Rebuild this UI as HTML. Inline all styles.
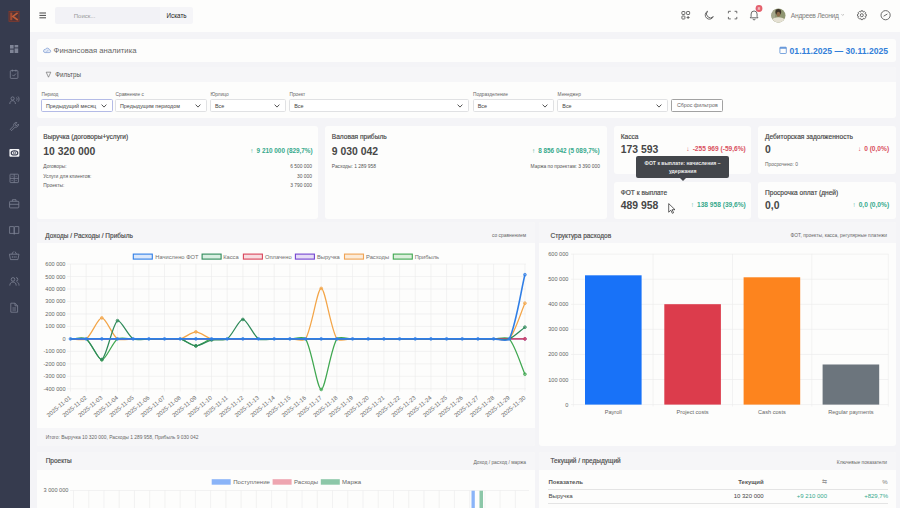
<!DOCTYPE html>
<html><head><meta charset="utf-8">
<style>
*{box-sizing:border-box;margin:0;padding:0}
html,body{width:900px;height:508px;overflow:hidden}
body{position:relative;background:#f4f4f7;font-family:"Liberation Sans",sans-serif;color:#333}
.abs{position:absolute}
.sidebar{left:0;top:0;width:30px;height:508px;background:#363b4e}
.topbar{left:30px;top:0;width:870px;height:31.5px;background:#fdfdfc}
.card{position:absolute;background:#fdfdfc;border-radius:3px}
.t{position:absolute;white-space:nowrap;line-height:1}
.b{font-weight:bold}
.sel{position:absolute;top:99.3px;height:13px;border:0.7px solid #e0e1e3;border-radius:1.6px;background:#fff}
.sel span{position:absolute;left:4px;top:3px;font-size:5.4px;color:#444;white-space:nowrap}
.sel svg{position:absolute;right:5px;top:3.4px}
.lab{position:absolute;top:91.7px;font-size:4.8px;color:#666;white-space:nowrap}
.ic{position:absolute}
</style></head><body>
<div class="abs sidebar"></div>
<div class="abs topbar"></div>

<!-- sidebar icons -->
<svg class="abs" style="left:0;top:0" width="31" height="320">
  <rect x="9" y="11.4" width="10" height="9.9" fill="#4e3539" stroke="#8a3a2a" stroke-width="0.8"/>
  <rect x="10.2" y="12.6" width="2.1" height="7.6" fill="#a44c34"/>
  <path d="M17.6 12.8 L12.8 16.4 L17.8 20" stroke="#c05e3a" stroke-width="1.6" fill="none"/>
  <g fill="#7f8496">
    <rect x="10" y="45" width="3.6" height="3.6"/><rect x="14.6" y="45" width="3.6" height="2.4"/>
    <rect x="10" y="49.6" width="3.6" height="3.4"/><rect x="14.6" y="48.4" width="3.6" height="4.6"/>
  </g>
  <g fill="none" stroke="#7f8496" stroke-width="0.8">
    <rect x="10.3" y="70.6" width="7.6" height="7.8" rx="0.8"/>
    <path d="M12.3 69.6v2 M15.9 69.6v2 M12.3 74.8l1.3 1.3 2.3-2.5"/>
    <circle cx="12.6" cy="98.5" r="1.6"/><path d="M9.8 104c0-2.2 1.2-3.3 2.8-3.3s2.8 1.1 2.8 3.3 M16.5 97.5c.8.8.8 2.4 0 3.2 M18 96.5c1.4 1.4 1.4 3.8 0 5.2"/>
    <path d="M16.8 122.5a2.6 2.6 0 0 0-3 3.3l-3.5 3.5 1.3 1.3 3.5-3.5a2.6 2.6 0 0 0 3.3-3l-1.5 1.5-1.2-.2-.2-1.2z"/>
  </g>
  <rect x="9.4" y="149" width="10" height="7.8" rx="1" fill="#f4f4f6"/>
  <ellipse cx="14.5" cy="152.9" rx="3.3" ry="2.1" fill="none" stroke="#363b4e" stroke-width="1.1"/>
  <circle cx="14.5" cy="152.9" r="1.1" fill="#f4f4f6" stroke="#363b4e" stroke-width="0.7"/>
  <g fill="none" stroke="#7f8496" stroke-width="0.8">
    <rect x="10" y="174.2" width="8.4" height="8.4" rx="0.6"/><path d="M10 178.4h8.4 M14.2 174.2v8.4 M11.6 176.3h1 M15.6 176.3h1 M11.6 180.5h1 M15.6 180.5h1"/>
    <rect x="9.6" y="201.3" width="9.2" height="6.6" rx="0.8"/><path d="M12.4 201.3v-1.6h3.6v1.6 M9.6 204.3h9.2"/>
    <path d="M9.6 226.6h3.8c.6 0 .8.4.8.8v6.8c0-.4-.3-.8-.8-.8H9.6z M18.8 226.6H15c-.6 0-.8.4-.8.8v6.8c0-.4.3-.8.8-.8h3.8z"/>
    <path d="M9.4 254.2h9.6l-1.1 5.4h-7.4z M11.8 254.2l1.6-2.6 M16.6 254.2l-1.6-2.6 M12.4 256.2v1.6 M14.2 256.2v1.6 M16 256.2v1.6"/>
    <circle cx="13" cy="279.4" r="1.8"/><path d="M9.8 285.6c0-2.4 1.4-3.6 3.2-3.6s3.2 1.2 3.2 3.6 M16 277.6a1.8 1.8 0 0 1 0 3.6 M17.4 282.2c1 .4 1.6 1.6 1.6 3.4"/>
    <path d="M10.8 303.2h4.2l2.6 2.6v6.4h-6.8z M15 303.2v2.6h2.6 M12.4 308h3.6 M12.4 310h3.6"/>
  </g>
</svg>

<!-- topbar -->
<svg class="abs" style="left:39px;top:12px" width="8" height="8"><g fill="#4a4a4a"><rect x="0.4" y="0.5" width="6.6" height="1"/><rect x="0.4" y="2.9" width="6.6" height="1"/><rect x="0.4" y="5.3" width="6.6" height="1"/></g></svg>
<div class="abs" style="left:55px;top:7.2px;width:105px;height:17px;background:#f2f2f6;border-radius:2px 0 0 2px"></div>
<div class="abs" style="left:160px;top:7.2px;width:33px;height:17px;background:#f5f5f8;border-radius:0 2px 2px 0"></div>
<div class="t" style="left:73.8px;top:12.6px;font-size:6px;color:#999">Поиск...</div>
<div class="t" style="left:166.5px;top:12.8px;font-size:6.3px;color:#222">Искать</div>

<svg class="abs" style="left:0;top:0" width="900" height="32">
  <g fill="none" stroke="#5a5a5a" stroke-width="0.9">
    <rect x="681.9" y="11.5" width="3" height="3" rx="0.6"/><rect x="686.6" y="11.5" width="3" height="3" rx="0.6"/><rect x="681.9" y="16" width="3" height="3" rx="0.6"/>
    <path d="M686.6 17.5h3 M688.1 16v3"/>
    <path d="M707.6 11.2 A4.2 4.2 0 1 0 713.3 16.6 A3.6 3.6 0 0 1 707.6 11.2 Z"/>
    <path d="M728.4 13.3v-2h2.4 M734.6 11.3h2.2v2 M736.8 16.9v2h-2.2 M730.8 18.9h-2.4v-2"/>
    <path d="M751.1 16.6v-2.6a3 3 0 0 1 6 0v2.6l0.9 1.2h-7.8z M753 18.8a1.1 1.1 0 0 0 2.2 0"/>
    <path d="M860.70 11.91 L860.96 10.80 L862.84 10.80 L863.10 11.91 L863.38 12.03 L864.35 11.43 L865.67 12.75 L865.07 13.72 L865.19 14.00 L866.30 14.26 L866.30 16.14 L865.19 16.40 L865.07 16.68 L865.67 17.65 L864.35 18.97 L863.38 18.37 L863.10 18.49 L862.84 19.60 L860.96 19.60 L860.70 18.49 L860.42 18.37 L859.45 18.97 L858.13 17.65 L858.73 16.68 L858.61 16.40 L857.50 16.14 L857.50 14.26 L858.61 14.00 L858.73 13.72 L858.13 12.75 L859.45 11.43 L860.42 12.03Z" stroke-linejoin="round"/>
    <circle cx="861.8" cy="15.2" r="1.5"/>
    <circle cx="885.6" cy="15.2" r="4.6"/>
    <path d="M883.6 16.2l3.8-2.2"/>
    <path d="M841.6 14.3l1.1 1.1 1.1-1.1" stroke="#888" stroke-width="0.6"/>
  </g>
  <circle cx="759" cy="8.5" r="3.4" fill="#e4606d"/>
  <text x="759" y="10.2" font-size="4.4" fill="#fff" text-anchor="middle" font-family="Liberation Sans">8</text>
  <defs><clipPath id="av"><circle cx="778.4" cy="15.6" r="7.1"/></clipPath></defs>
  <g clip-path="url(#av)">
    <rect x="771" y="8" width="15" height="15" fill="#8f9672"/>
    <rect x="771" y="8" width="4" height="15" fill="#a6a88e"/>
    <ellipse cx="778.3" cy="12" rx="2.9" ry="3" fill="#3e3429"/>
    <ellipse cx="778.4" cy="14.3" rx="1.9" ry="2.5" fill="#8d6b4b"/>
    <path d="M771 24v-3.5c1.8-2.2 4.2-3.2 7.4-3.2s5.6 1 7.4 3.2V24z" fill="#e4e0d2"/>
  </g>
</svg>
<div class="t" style="left:790.8px;top:12.5px;font-size:6.7px;letter-spacing:-0.28px;color:#7d7d7d">Андреев Леонид</div>

<!-- title card -->
<div class="card" style="left:37px;top:38.5px;width:858.5px;height:23.8px"></div>
<svg class="abs" style="left:42.8px;top:47px" width="9" height="7"><path d="M1.9 5.6h4.3a1.4 1.4 0 0 0 .2-2.8a2.1 2.1 0 0 0-4-.4a1.6 1.6 0 0 0-.5 3.2z" fill="#e3eaf6" stroke="#7d9bd2" stroke-width="0.7"/><path d="M3 5.5l2.3-2.6" stroke="#7d9bd2" stroke-width="0.5"/></svg>
<div class="t" style="left:53.6px;top:47px;font-size:7.7px;color:#666">Финансовая аналитика</div>
<svg class="abs" style="left:779px;top:46px" width="9" height="9"><rect x="0.9" y="1.2" width="6.4" height="6.3" rx="0.6" fill="none" stroke="#5b8fd6" stroke-width="0.8"/><rect x="0.9" y="1.2" width="6.4" height="1.5" fill="#5b8fd6"/></svg>
<div class="t b" style="left:789.6px;top:46.7px;font-size:8.6px;color:#3380d9">01.11.2025 — 30.11.2025</div>

<!-- filter card -->
<div class="card" style="left:37px;top:66.5px;width:859px;height:51.3px;background:#fdfdfc"></div>
<div class="abs" style="left:37px;top:66.5px;width:859px;height:15.6px;background:#f6f6f8;border-radius:3px 3px 0 0"></div>
<svg class="abs" style="left:45px;top:71px" width="7" height="8"><path d="M1.2 1.2h4.6l-2.3 5z" fill="none" stroke="#666" stroke-width="0.65" stroke-linejoin="round"/></svg>
<div class="t" style="left:55.3px;top:72px;font-size:6.3px;color:#555">Фильтры</div>

<div class="lab" style="left:41.5px">Период</div>
<div class="sel" style="left:41px;width:72.0px;border-color:#b4bbe6"><span>Предыдущий месяц</span><svg width="6" height="4"><path d="M0.6 0.6 L3 3.1 L5.4 0.6" fill="none" stroke="#555" stroke-width="1"/></svg></div>
<div class="lab" style="left:115.5px">Сравнение с</div>
<div class="sel" style="left:115px;width:91.5px"><span>Предыдущим периодом</span><svg width="6" height="4"><path d="M0.6 0.6 L3 3.1 L5.4 0.6" fill="none" stroke="#555" stroke-width="1"/></svg></div>
<div class="lab" style="left:210.5px">Юрлицо</div>
<div class="sel" style="left:210px;width:75.7px"><span>Все</span><svg width="6" height="4"><path d="M0.6 0.6 L3 3.1 L5.4 0.6" fill="none" stroke="#555" stroke-width="1"/></svg></div>
<div class="lab" style="left:289.5px">Проект</div>
<div class="sel" style="left:289.2px;width:180.0px"><span>Все</span><svg width="6" height="4"><path d="M0.6 0.6 L3 3.1 L5.4 0.6" fill="none" stroke="#555" stroke-width="1"/></svg></div>
<div class="lab" style="left:473px">Подразделение</div>
<div class="sel" style="left:472.7px;width:81.1px"><span>Все</span><svg width="6" height="4"><path d="M0.6 0.6 L3 3.1 L5.4 0.6" fill="none" stroke="#555" stroke-width="1"/></svg></div>
<div class="lab" style="left:557.6px">Менеджер</div>
<div class="sel" style="left:557.3px;width:110.5px"><span>Все</span><svg width="6" height="4"><path d="M0.6 0.6 L3 3.1 L5.4 0.6" fill="none" stroke="#555" stroke-width="1"/></svg></div>
<div class="abs" style="left:671px;top:99.2px;width:52.3px;height:13px;border:0.8px solid #a2a2a2;border-radius:1.5px;background:#fff"></div>
<div class="t" style="left:677px;top:103px;font-size:5.3px;color:#666">Сброс фильтров</div>

<!-- KPI cards -->
<div class="card" style="left:37.3px;top:126px;width:281px;height:93px"></div>
<div class="t b" style="left:43.3px;top:134px;font-size:6.6px;color:#454545;font-weight:normal;-webkit-text-stroke:0.16px #454545">Выручка (договоры+услуги)</div>
<div class="t b" style="left:43.3px;top:146.6px;font-size:10.4px;color:#474747">10 320 000</div>
<div class="t b" style="left:250px;top:147.8px;font-size:6.4px;color:#36a98c;width:62.7px;text-align:right"><span style="font-weight:normal;margin-right:3px">↑</span>9 210 000 (829,7%)</div>
<div class="t" style="left:43.3px;top:165px;font-size:4.9px;color:#555">Договоры:</div>
<div class="t" style="left:43.3px;top:174.7px;font-size:4.9px;color:#555">Услуги для клиентов:</div>
<div class="t" style="left:43.3px;top:183.6px;font-size:4.9px;color:#555">Проекты:</div>
<div class="t" style="left:262px;top:165px;font-size:4.9px;color:#555;width:50px;text-align:right">6 500 000</div>
<div class="t" style="left:262px;top:174.7px;font-size:4.9px;color:#555;width:50px;text-align:right">30 000</div>
<div class="t" style="left:262px;top:183.6px;font-size:4.9px;color:#555;width:50px;text-align:right">3 790 000</div>

<div class="card" style="left:325px;top:126px;width:282px;height:93px"></div>
<div class="t b" style="left:331.8px;top:134.2px;font-size:6.6px;color:#454545;font-weight:normal;-webkit-text-stroke:0.16px #454545">Валовая прибыль</div>
<div class="t b" style="left:331.8px;top:146.6px;font-size:10.4px;color:#474747">9 030 042</div>
<div class="t b" style="left:520px;top:147.8px;font-size:6.4px;color:#36a98c;width:79.6px;text-align:right"><span style="font-weight:normal;margin-right:3px">↑</span>8 856 042 (5 089,7%)</div>
<div class="t" style="left:331.8px;top:164.8px;font-size:4.9px;color:#555">Расходы: 1 289 958</div>
<div class="t" style="left:520px;top:164.8px;font-size:4.9px;color:#555;width:80px;text-align:right">Маржа по проектам: 3 390 000</div>

<div class="card" style="left:614px;top:126px;width:137px;height:48.3px"></div>
<div class="t b" style="left:620.7px;top:134.2px;font-size:6.6px;color:#454545;font-weight:normal;-webkit-text-stroke:0.16px #454545">Касса</div>
<div class="t b" style="left:620.7px;top:144.5px;font-size:10.4px;color:#474747">173 593</div>
<div class="t b" style="left:680px;top:145.5px;font-size:6.6px;color:#d9505e;width:65.8px;text-align:right"><span style="font-weight:normal;margin-right:3px">↓</span>-255 969 (-59,6%)</div>

<div class="card" style="left:614px;top:182px;width:137px;height:37px"></div>
<div class="t b" style="left:620.7px;top:189.5px;font-size:6.6px;color:#454545;font-weight:normal;-webkit-text-stroke:0.16px #454545">ФОТ к выплате</div>
<div class="t b" style="left:620.7px;top:200.5px;font-size:10.4px;color:#474747">489 958</div>
<div class="t b" style="left:680px;top:201.5px;font-size:6.6px;color:#36a98c;width:65.8px;text-align:right"><span style="font-weight:normal;margin-right:3px">↑</span>138 958 (39,6%)</div>

<div class="card" style="left:757.7px;top:126px;width:138px;height:48.3px"></div>
<div class="t b" style="left:765px;top:134.2px;font-size:6.6px;color:#454545;font-weight:normal;-webkit-text-stroke:0.16px #454545">Дебиторская задолженность</div>
<div class="t b" style="left:765px;top:144.5px;font-size:10.4px;color:#474747">0</div>
<div class="t b" style="left:830px;top:145.5px;font-size:6.6px;color:#d9505e;width:59.1px;text-align:right"><span style="font-weight:normal;margin-right:3px">↓</span>0 (0,0%)</div>
<div class="t" style="left:765px;top:162.6px;font-size:4.9px;color:#666">Просрочено: 0</div>

<div class="card" style="left:757.7px;top:182px;width:138px;height:37px"></div>
<div class="t b" style="left:765px;top:189.5px;font-size:6.6px;color:#454545;font-weight:normal;-webkit-text-stroke:0.16px #454545">Просрочка оплат (дней)</div>
<div class="t b" style="left:765px;top:200.5px;font-size:10.4px;color:#474747">0,0</div>
<div class="t b" style="left:830px;top:201.5px;font-size:6.6px;color:#36a98c;width:59.1px;text-align:right"><span style="font-weight:normal;margin-right:3px">↑</span>0,0 (0,0%)</div>

<!-- tooltip -->
<div class="abs" style="left:636px;top:156px;width:93.3px;height:22.3px;background:#43464b;border-radius:2px"></div>
<div class="abs" style="left:679.5px;top:178px;width:0;height:0;border-left:3px solid transparent;border-right:3px solid transparent;border-top:3.2px solid #43464b"></div>
<div class="t b" style="left:636px;top:161px;width:93.3px;text-align:center;font-size:5.1px;color:#ececec">ФОТ к выплате: начисления −</div>
<div class="t b" style="left:636px;top:168.6px;width:93.3px;text-align:center;font-size:5.1px;color:#ececec">удержания</div>
<svg class="abs" style="left:668px;top:203px" width="8" height="11"><path d="M0.7 0.6v8.6l2.1-2 1.5 3.1 1.3-.6-1.5-3h2.9z" fill="#fff" stroke="#222" stroke-width="0.7"/></svg>

<!-- chart 1 card -->
<div class="card" style="left:37px;top:222px;width:497.5px;height:224px;border-radius:3px"></div>
<div class="abs" style="left:37px;top:222px;width:497.5px;height:20.5px;background:#f6f6f8;border-radius:3px 3px 0 0"></div>
<div class="abs" style="left:37px;top:428.3px;width:497.5px;height:17.7px;background:#f6f6f8;border-radius:0 0 3px 3px"></div>
<div class="t" style="left:45.3px;top:233px;font-size:6.5px;color:#4a4a4a;-webkit-text-stroke:0.16px #4a4a4a">Доходы / Расходы / Прибыль</div>
<div class="t" style="left:460px;top:234.2px;width:66px;text-align:right;font-size:4.9px;color:#666">со сравнением</div>
<div class="t" style="left:45.7px;top:435.6px;font-size:4.9px;color:#666">Итого: Выручка 10 320 000, Расходы 1 289 958, Прибыль 9 030 042</div>
<svg class="abs" style="left:0;top:0" width="900" height="508">
  <g stroke-width="1.1">
    <rect x="133.3" y="254.1" width="19" height="5" fill="#dbe8fb" stroke="#2f7ee6"/>
    <rect x="202.1" y="254.1" width="19" height="5" fill="#d9efe2" stroke="#2f8a5a"/>
    <rect x="243.4" y="254.1" width="19" height="5" fill="#f8dde1" stroke="#d9445a"/>
    <rect x="295.4" y="254.1" width="19" height="5" fill="#e6dcf6" stroke="#7444d0"/>
    <rect x="344.5" y="254.1" width="19" height="5" fill="#fcebd8" stroke="#f0a455"/>
    <rect x="393.3" y="254.1" width="19" height="5" fill="#dcefdc" stroke="#3fa750"/>
  </g>
  <g font-family="Liberation Sans" font-size="5.75" fill="#707070">
    <text x="155.3" y="258.5">Начислено ФОТ</text>
    <text x="223.2" y="258.5">Касса</text>
    <text x="265" y="258.5">Оплачено</text>
    <text x="317" y="258.5">Выручка</text>
    <text x="366" y="258.5">Расходы</text>
    <text x="414.7" y="258.5">Прибыль</text>
  </g>
</svg>
<svg width="900" height="508" style="position:absolute;left:0;top:0">
<g><line x1="67" y1="264.08" x2="526" y2="264.08" stroke="#ebebeb" stroke-width="0.6"/><line x1="67" y1="276.55" x2="526" y2="276.55" stroke="#ebebeb" stroke-width="0.6"/><line x1="67" y1="289.02" x2="526" y2="289.02" stroke="#ebebeb" stroke-width="0.6"/><line x1="67" y1="301.49" x2="526" y2="301.49" stroke="#ebebeb" stroke-width="0.6"/><line x1="67" y1="313.96" x2="526" y2="313.96" stroke="#ebebeb" stroke-width="0.6"/><line x1="67" y1="326.43" x2="526" y2="326.43" stroke="#ebebeb" stroke-width="0.6"/><line x1="67" y1="338.90" x2="526" y2="338.90" stroke="#ebebeb" stroke-width="0.6"/><line x1="67" y1="351.37" x2="526" y2="351.37" stroke="#ebebeb" stroke-width="0.6"/><line x1="67" y1="363.84" x2="526" y2="363.84" stroke="#ebebeb" stroke-width="0.6"/><line x1="67" y1="376.31" x2="526" y2="376.31" stroke="#ebebeb" stroke-width="0.6"/><line x1="67" y1="388.78" x2="526" y2="388.78" stroke="#ebebeb" stroke-width="0.6"/><line x1="70.50" y1="264" x2="70.50" y2="391.5" stroke="#ebebeb" stroke-width="0.6"/><line x1="86.17" y1="264" x2="86.17" y2="391.5" stroke="#ebebeb" stroke-width="0.6"/><line x1="101.84" y1="264" x2="101.84" y2="391.5" stroke="#ebebeb" stroke-width="0.6"/><line x1="117.51" y1="264" x2="117.51" y2="391.5" stroke="#ebebeb" stroke-width="0.6"/><line x1="133.18" y1="264" x2="133.18" y2="391.5" stroke="#ebebeb" stroke-width="0.6"/><line x1="148.85" y1="264" x2="148.85" y2="391.5" stroke="#ebebeb" stroke-width="0.6"/><line x1="164.52" y1="264" x2="164.52" y2="391.5" stroke="#ebebeb" stroke-width="0.6"/><line x1="180.19" y1="264" x2="180.19" y2="391.5" stroke="#ebebeb" stroke-width="0.6"/><line x1="195.86" y1="264" x2="195.86" y2="391.5" stroke="#ebebeb" stroke-width="0.6"/><line x1="211.53" y1="264" x2="211.53" y2="391.5" stroke="#ebebeb" stroke-width="0.6"/><line x1="227.20" y1="264" x2="227.20" y2="391.5" stroke="#ebebeb" stroke-width="0.6"/><line x1="242.87" y1="264" x2="242.87" y2="391.5" stroke="#ebebeb" stroke-width="0.6"/><line x1="258.54" y1="264" x2="258.54" y2="391.5" stroke="#ebebeb" stroke-width="0.6"/><line x1="274.21" y1="264" x2="274.21" y2="391.5" stroke="#ebebeb" stroke-width="0.6"/><line x1="289.88" y1="264" x2="289.88" y2="391.5" stroke="#ebebeb" stroke-width="0.6"/><line x1="305.55" y1="264" x2="305.55" y2="391.5" stroke="#ebebeb" stroke-width="0.6"/><line x1="321.22" y1="264" x2="321.22" y2="391.5" stroke="#ebebeb" stroke-width="0.6"/><line x1="336.89" y1="264" x2="336.89" y2="391.5" stroke="#ebebeb" stroke-width="0.6"/><line x1="352.56" y1="264" x2="352.56" y2="391.5" stroke="#ebebeb" stroke-width="0.6"/><line x1="368.23" y1="264" x2="368.23" y2="391.5" stroke="#ebebeb" stroke-width="0.6"/><line x1="383.90" y1="264" x2="383.90" y2="391.5" stroke="#ebebeb" stroke-width="0.6"/><line x1="399.57" y1="264" x2="399.57" y2="391.5" stroke="#ebebeb" stroke-width="0.6"/><line x1="415.24" y1="264" x2="415.24" y2="391.5" stroke="#ebebeb" stroke-width="0.6"/><line x1="430.91" y1="264" x2="430.91" y2="391.5" stroke="#ebebeb" stroke-width="0.6"/><line x1="446.58" y1="264" x2="446.58" y2="391.5" stroke="#ebebeb" stroke-width="0.6"/><line x1="462.25" y1="264" x2="462.25" y2="391.5" stroke="#ebebeb" stroke-width="0.6"/><line x1="477.92" y1="264" x2="477.92" y2="391.5" stroke="#ebebeb" stroke-width="0.6"/><line x1="493.59" y1="264" x2="493.59" y2="391.5" stroke="#ebebeb" stroke-width="0.6"/><line x1="509.26" y1="264" x2="509.26" y2="391.5" stroke="#ebebeb" stroke-width="0.6"/><line x1="524.93" y1="264" x2="524.93" y2="391.5" stroke="#ebebeb" stroke-width="0.6"/></g>
<g font-family="Liberation Sans" font-size="5.6" fill="#666"><text x="65.5" y="266.08" text-anchor="end">600 000</text><text x="65.5" y="278.55" text-anchor="end">500 000</text><text x="65.5" y="291.02" text-anchor="end">400 000</text><text x="65.5" y="303.49" text-anchor="end">300 000</text><text x="65.5" y="315.96" text-anchor="end">200 000</text><text x="65.5" y="328.43" text-anchor="end">100 000</text><text x="65.5" y="340.90" text-anchor="end">0</text><text x="65.5" y="353.37" text-anchor="end">-100 000</text><text x="65.5" y="365.84" text-anchor="end">-200 000</text><text x="65.5" y="378.31" text-anchor="end">-300 000</text><text x="65.5" y="390.78" text-anchor="end">-400 000</text></g><g font-family="Liberation Sans" font-size="5.9" fill="#666"><text transform="translate(69.50 396) rotate(-40)" text-anchor="end" y="3.2">2025-11-01</text><text transform="translate(85.17 396) rotate(-40)" text-anchor="end" y="3.2">2025-11-02</text><text transform="translate(100.84 396) rotate(-40)" text-anchor="end" y="3.2">2025-11-03</text><text transform="translate(116.51 396) rotate(-40)" text-anchor="end" y="3.2">2025-11-04</text><text transform="translate(132.18 396) rotate(-40)" text-anchor="end" y="3.2">2025-11-05</text><text transform="translate(147.85 396) rotate(-40)" text-anchor="end" y="3.2">2025-11-06</text><text transform="translate(163.52 396) rotate(-40)" text-anchor="end" y="3.2">2025-11-07</text><text transform="translate(179.19 396) rotate(-40)" text-anchor="end" y="3.2">2025-11-08</text><text transform="translate(194.86 396) rotate(-40)" text-anchor="end" y="3.2">2025-11-09</text><text transform="translate(210.53 396) rotate(-40)" text-anchor="end" y="3.2">2025-11-10</text><text transform="translate(226.20 396) rotate(-40)" text-anchor="end" y="3.2">2025-11-11</text><text transform="translate(241.87 396) rotate(-40)" text-anchor="end" y="3.2">2025-11-12</text><text transform="translate(257.54 396) rotate(-40)" text-anchor="end" y="3.2">2025-11-13</text><text transform="translate(273.21 396) rotate(-40)" text-anchor="end" y="3.2">2025-11-14</text><text transform="translate(288.88 396) rotate(-40)" text-anchor="end" y="3.2">2025-11-15</text><text transform="translate(304.55 396) rotate(-40)" text-anchor="end" y="3.2">2025-11-16</text><text transform="translate(320.22 396) rotate(-40)" text-anchor="end" y="3.2">2025-11-17</text><text transform="translate(335.89 396) rotate(-40)" text-anchor="end" y="3.2">2025-11-18</text><text transform="translate(351.56 396) rotate(-40)" text-anchor="end" y="3.2">2025-11-19</text><text transform="translate(367.23 396) rotate(-40)" text-anchor="end" y="3.2">2025-11-20</text><text transform="translate(382.90 396) rotate(-40)" text-anchor="end" y="3.2">2025-11-21</text><text transform="translate(398.57 396) rotate(-40)" text-anchor="end" y="3.2">2025-11-22</text><text transform="translate(414.24 396) rotate(-40)" text-anchor="end" y="3.2">2025-11-23</text><text transform="translate(429.91 396) rotate(-40)" text-anchor="end" y="3.2">2025-11-24</text><text transform="translate(445.58 396) rotate(-40)" text-anchor="end" y="3.2">2025-11-25</text><text transform="translate(461.25 396) rotate(-40)" text-anchor="end" y="3.2">2025-11-26</text><text transform="translate(476.92 396) rotate(-40)" text-anchor="end" y="3.2">2025-11-27</text><text transform="translate(492.59 396) rotate(-40)" text-anchor="end" y="3.2">2025-11-28</text><text transform="translate(508.26 396) rotate(-40)" text-anchor="end" y="3.2">2025-11-29</text><text transform="translate(523.93 396) rotate(-40)" text-anchor="end" y="3.2">2025-11-30</text></g>
<g><path d="M70.50 338.90 C74.57 338.90 83.12 336.86 86.17 338.90 C91.27 342.31 97.77 359.85 101.84 359.85 C105.91 359.85 112.41 342.31 117.51 338.90 C120.56 336.86 129.11 338.90 133.18 338.90 C137.25 338.90 144.78 338.90 148.85 338.90 C152.92 338.90 160.45 338.90 164.52 338.90 C168.59 338.90 176.30 338.03 180.19 338.90 C184.45 339.85 191.79 345.88 195.86 345.88 C199.93 345.88 207.27 339.85 211.53 338.90 C215.42 338.03 223.13 338.90 227.20 338.90 C231.27 338.90 238.80 338.90 242.87 338.90 C246.94 338.90 254.47 338.90 258.54 338.90 C262.61 338.90 270.14 338.90 274.21 338.90 C278.28 338.90 285.81 338.90 289.88 338.90 C293.95 338.90 303.69 335.90 305.55 338.90 C311.84 349.03 317.15 389.40 321.22 389.40 C325.29 389.40 330.60 349.03 336.89 338.90 C338.75 335.90 348.49 338.90 352.56 338.90 C356.63 338.90 364.16 338.90 368.23 338.90 C372.30 338.90 379.83 338.90 383.90 338.90 C387.97 338.90 395.50 338.90 399.57 338.90 C403.64 338.90 411.17 338.90 415.24 338.90 C419.31 338.90 426.84 338.90 430.91 338.90 C434.98 338.90 442.51 338.90 446.58 338.90 C450.65 338.90 458.18 338.90 462.25 338.90 C466.32 338.90 473.85 338.90 477.92 338.90 C481.99 338.90 489.52 338.90 493.59 338.90 C497.66 338.90 506.91 336.25 509.26 338.90 C515.06 345.43 520.86 365.01 524.93 374.19" fill="none" stroke="#3fa750" stroke-width="1.25"/><circle cx="101.84" cy="359.85" r="1.4" fill="#3fa750" fill-opacity="0.55" stroke="#3fa750" stroke-width="0.7"/><circle cx="195.86" cy="345.88" r="1.4" fill="#3fa750" fill-opacity="0.55" stroke="#3fa750" stroke-width="0.7"/><circle cx="321.22" cy="389.40" r="1.4" fill="#3fa750" fill-opacity="0.55" stroke="#3fa750" stroke-width="0.7"/><circle cx="524.93" cy="374.19" r="1.4" fill="#3fa750" fill-opacity="0.55" stroke="#3fa750" stroke-width="0.7"/><path d="M70.50 338.90 C74.57 338.90 83.12 340.94 86.17 338.90 C91.27 335.49 97.77 317.95 101.84 317.95 C105.91 317.95 112.41 335.49 117.51 338.90 C120.56 340.94 129.11 338.90 133.18 338.90 C137.25 338.90 144.78 338.90 148.85 338.90 C152.92 338.90 160.45 338.90 164.52 338.90 C168.59 338.90 176.30 339.77 180.19 338.90 C184.45 337.95 191.79 331.92 195.86 331.92 C199.93 331.92 207.27 337.95 211.53 338.90 C215.42 339.77 223.13 338.90 227.20 338.90 C231.27 338.90 238.80 338.90 242.87 338.90 C246.94 338.90 254.47 338.90 258.54 338.90 C262.61 338.90 270.14 338.90 274.21 338.90 C278.28 338.90 285.81 338.90 289.88 338.90 C293.95 338.90 303.69 341.90 305.55 338.90 C311.84 328.77 317.15 288.40 321.22 288.40 C325.29 288.40 330.60 328.77 336.89 338.90 C338.75 341.90 348.49 338.90 352.56 338.90 C356.63 338.90 364.16 338.90 368.23 338.90 C372.30 338.90 379.83 338.90 383.90 338.90 C387.97 338.90 395.50 338.90 399.57 338.90 C403.64 338.90 411.17 338.90 415.24 338.90 C419.31 338.90 426.84 338.90 430.91 338.90 C434.98 338.90 442.51 338.90 446.58 338.90 C450.65 338.90 458.18 338.90 462.25 338.90 C466.32 338.90 473.85 338.90 477.92 338.90 C481.99 338.90 489.52 338.90 493.59 338.90 C497.66 338.90 506.92 341.56 509.26 338.90 C515.07 332.29 520.86 312.51 524.93 303.24" fill="none" stroke="#f3a548" stroke-width="1.25"/><circle cx="101.84" cy="317.95" r="1.4" fill="#f3a548" fill-opacity="0.55" stroke="#f3a548" stroke-width="0.7"/><circle cx="195.86" cy="331.92" r="1.4" fill="#f3a548" fill-opacity="0.55" stroke="#f3a548" stroke-width="0.7"/><circle cx="321.22" cy="288.40" r="1.4" fill="#f3a548" fill-opacity="0.55" stroke="#f3a548" stroke-width="0.7"/><circle cx="524.93" cy="303.24" r="1.4" fill="#f3a548" fill-opacity="0.55" stroke="#f3a548" stroke-width="0.7"/><path d="M70.50 338.90 C74.57 338.90 82.10 338.90 86.17 338.90 C90.24 338.90 97.77 338.90 101.84 338.90 C105.91 338.90 113.44 338.90 117.51 338.90 C121.58 338.90 129.11 338.90 133.18 338.90 C137.25 338.90 144.78 338.90 148.85 338.90 C152.92 338.90 160.45 338.90 164.52 338.90 C168.59 338.90 176.12 338.90 180.19 338.90 C184.26 338.90 191.79 338.90 195.86 338.90 C199.93 338.90 207.46 338.90 211.53 338.90 C215.60 338.90 223.13 338.90 227.20 338.90 C231.27 338.90 238.80 338.90 242.87 338.90 C246.94 338.90 254.47 338.90 258.54 338.90 C262.61 338.90 270.14 338.90 274.21 338.90 C278.28 338.90 285.81 338.90 289.88 338.90 C293.95 338.90 301.48 338.90 305.55 338.90 C309.62 338.90 317.15 338.90 321.22 338.90 C325.29 338.90 332.82 338.90 336.89 338.90 C340.96 338.90 348.49 338.90 352.56 338.90 C356.63 338.90 364.16 338.90 368.23 338.90 C372.30 338.90 379.83 338.90 383.90 338.90 C387.97 338.90 395.50 338.90 399.57 338.90 C403.64 338.90 411.17 338.90 415.24 338.90 C419.31 338.90 426.84 338.90 430.91 338.90 C434.98 338.90 442.51 338.90 446.58 338.90 C450.65 338.90 458.18 338.90 462.25 338.90 C466.32 338.90 473.85 338.90 477.92 338.90 C481.99 338.90 489.52 338.90 493.59 338.90 C497.66 338.90 505.19 338.90 509.26 338.90 C513.33 338.90 520.86 338.90 524.93 338.90" fill="none" stroke="#7444d0" stroke-width="1.25"/><circle cx="524.93" cy="338.90" r="1.4" fill="#7444d0" fill-opacity="0.55" stroke="#7444d0" stroke-width="0.7"/><path d="M70.50 338.90 C74.57 338.90 82.10 338.90 86.17 338.90 C90.24 338.90 97.77 338.90 101.84 338.90 C105.91 338.90 113.44 338.90 117.51 338.90 C121.58 338.90 129.11 338.90 133.18 338.90 C137.25 338.90 144.78 338.90 148.85 338.90 C152.92 338.90 160.45 338.90 164.52 338.90 C168.59 338.90 176.12 338.90 180.19 338.90 C184.26 338.90 191.79 338.90 195.86 338.90 C199.93 338.90 207.46 338.90 211.53 338.90 C215.60 338.90 223.13 338.90 227.20 338.90 C231.27 338.90 238.80 338.90 242.87 338.90 C246.94 338.90 254.47 338.90 258.54 338.90 C262.61 338.90 270.14 338.90 274.21 338.90 C278.28 338.90 285.81 338.90 289.88 338.90 C293.95 338.90 301.48 338.90 305.55 338.90 C309.62 338.90 317.15 338.90 321.22 338.90 C325.29 338.90 332.82 338.90 336.89 338.90 C340.96 338.90 348.49 338.90 352.56 338.90 C356.63 338.90 364.16 338.90 368.23 338.90 C372.30 338.90 379.83 338.90 383.90 338.90 C387.97 338.90 395.50 338.90 399.57 338.90 C403.64 338.90 411.17 338.90 415.24 338.90 C419.31 338.90 426.84 338.90 430.91 338.90 C434.98 338.90 442.51 338.90 446.58 338.90 C450.65 338.90 458.18 338.90 462.25 338.90 C466.32 338.90 473.85 338.90 477.92 338.90 C481.99 338.90 489.52 338.90 493.59 338.90 C497.66 338.90 505.19 338.90 509.26 338.90 C513.33 338.90 520.86 338.90 524.93 338.90" fill="none" stroke="#d9445a" stroke-width="1.25"/><circle cx="524.93" cy="338.90" r="1.4" fill="#d9445a" fill-opacity="0.55" stroke="#d9445a" stroke-width="0.7"/><path d="M70.50 338.90 C74.57 338.90 83.10 336.88 86.17 338.90 C91.24 342.23 98.73 361.28 101.84 359.48 C106.88 356.55 112.33 324.09 117.51 320.69 C120.48 318.74 128.25 336.04 133.18 338.90 C136.40 340.77 144.78 338.90 148.85 338.90 C152.92 338.90 160.45 338.90 164.52 338.90 C168.59 338.90 176.30 338.03 180.19 338.90 C184.45 339.85 191.73 345.74 195.86 345.88 C199.88 346.03 207.33 340.96 211.53 340.02 C215.48 339.14 224.05 340.97 227.20 338.90 C232.20 335.62 238.80 319.45 242.87 319.45 C246.94 319.45 253.53 335.79 258.54 338.90 C261.68 340.85 270.14 338.90 274.21 338.90 C278.28 338.90 285.81 338.90 289.88 338.90 C293.95 338.90 301.48 338.90 305.55 338.90 C309.62 338.90 317.15 338.90 321.22 338.90 C325.29 338.90 332.82 338.90 336.89 338.90 C340.96 338.90 348.49 338.90 352.56 338.90 C356.63 338.90 364.16 338.90 368.23 338.90 C372.30 338.90 379.83 338.90 383.90 338.90 C387.97 338.90 395.50 338.90 399.57 338.90 C403.64 338.90 411.17 338.90 415.24 338.90 C419.31 338.90 426.84 338.90 430.91 338.90 C434.98 338.90 442.51 338.90 446.58 338.90 C450.65 338.90 458.18 338.90 462.25 338.90 C466.32 338.90 473.85 338.90 477.92 338.90 C481.99 338.90 489.52 338.90 493.59 338.90 C497.66 338.90 505.64 340.26 509.26 338.90 C513.78 337.21 520.86 330.23 524.93 327.18" fill="none" stroke="#2f8a5a" stroke-width="1.25"/><circle cx="101.84" cy="359.48" r="1.4" fill="#2f8a5a" fill-opacity="0.55" stroke="#2f8a5a" stroke-width="0.7"/><circle cx="117.51" cy="320.69" r="1.4" fill="#2f8a5a" fill-opacity="0.55" stroke="#2f8a5a" stroke-width="0.7"/><circle cx="195.86" cy="345.88" r="1.4" fill="#2f8a5a" fill-opacity="0.55" stroke="#2f8a5a" stroke-width="0.7"/><circle cx="211.53" cy="340.02" r="1.4" fill="#2f8a5a" fill-opacity="0.55" stroke="#2f8a5a" stroke-width="0.7"/><circle cx="242.87" cy="319.45" r="1.4" fill="#2f8a5a" fill-opacity="0.55" stroke="#2f8a5a" stroke-width="0.7"/><circle cx="524.93" cy="327.18" r="1.4" fill="#2f8a5a" fill-opacity="0.55" stroke="#2f8a5a" stroke-width="0.7"/><path d="M70.50 338.90 C74.57 338.90 82.10 338.90 86.17 338.90 C90.24 338.90 97.77 338.90 101.84 338.90 C105.91 338.90 113.44 338.90 117.51 338.90 C121.58 338.90 129.11 338.90 133.18 338.90 C137.25 338.90 144.78 338.90 148.85 338.90 C152.92 338.90 160.45 338.90 164.52 338.90 C168.59 338.90 176.12 338.90 180.19 338.90 C184.26 338.90 191.79 338.90 195.86 338.90 C199.93 338.90 207.46 338.90 211.53 338.90 C215.60 338.90 223.13 338.90 227.20 338.90 C231.27 338.90 238.80 338.90 242.87 338.90 C246.94 338.90 254.47 338.90 258.54 338.90 C262.61 338.90 270.14 338.90 274.21 338.90 C278.28 338.90 285.81 338.90 289.88 338.90 C293.95 338.90 301.48 338.90 305.55 338.90 C309.62 338.90 317.15 338.90 321.22 338.90 C325.29 338.90 332.82 338.90 336.89 338.90 C340.96 338.90 348.49 338.90 352.56 338.90 C356.63 338.90 364.16 338.90 368.23 338.90 C372.30 338.90 379.83 338.90 383.90 338.90 C387.97 338.90 395.50 338.90 399.57 338.90 C403.64 338.90 411.17 338.90 415.24 338.90 C419.31 338.90 426.84 338.90 430.91 338.90 C434.98 338.90 442.51 338.90 446.58 338.90 C450.65 338.90 458.18 338.90 462.25 338.90 C466.32 338.90 473.85 338.90 477.92 338.90 C481.99 338.90 489.52 338.90 493.59 338.90 C497.66 338.90 507.70 342.10 509.26 338.90 C515.85 325.40 520.86 291.38 524.93 274.68" fill="none" stroke="#2f7ee6" stroke-width="1.6"/><circle cx="70.50" cy="338.90" r="1.4" fill="#2f7ee6" fill-opacity="0.55" stroke="#2f7ee6" stroke-width="0.7"/><circle cx="86.17" cy="338.90" r="1.4" fill="#2f7ee6" fill-opacity="0.55" stroke="#2f7ee6" stroke-width="0.7"/><circle cx="101.84" cy="338.90" r="1.4" fill="#2f7ee6" fill-opacity="0.55" stroke="#2f7ee6" stroke-width="0.7"/><circle cx="117.51" cy="338.90" r="1.4" fill="#2f7ee6" fill-opacity="0.55" stroke="#2f7ee6" stroke-width="0.7"/><circle cx="133.18" cy="338.90" r="1.4" fill="#2f7ee6" fill-opacity="0.55" stroke="#2f7ee6" stroke-width="0.7"/><circle cx="148.85" cy="338.90" r="1.4" fill="#2f7ee6" fill-opacity="0.55" stroke="#2f7ee6" stroke-width="0.7"/><circle cx="164.52" cy="338.90" r="1.4" fill="#2f7ee6" fill-opacity="0.55" stroke="#2f7ee6" stroke-width="0.7"/><circle cx="180.19" cy="338.90" r="1.4" fill="#2f7ee6" fill-opacity="0.55" stroke="#2f7ee6" stroke-width="0.7"/><circle cx="195.86" cy="338.90" r="1.4" fill="#2f7ee6" fill-opacity="0.55" stroke="#2f7ee6" stroke-width="0.7"/><circle cx="211.53" cy="338.90" r="1.4" fill="#2f7ee6" fill-opacity="0.55" stroke="#2f7ee6" stroke-width="0.7"/><circle cx="227.20" cy="338.90" r="1.4" fill="#2f7ee6" fill-opacity="0.55" stroke="#2f7ee6" stroke-width="0.7"/><circle cx="242.87" cy="338.90" r="1.4" fill="#2f7ee6" fill-opacity="0.55" stroke="#2f7ee6" stroke-width="0.7"/><circle cx="258.54" cy="338.90" r="1.4" fill="#2f7ee6" fill-opacity="0.55" stroke="#2f7ee6" stroke-width="0.7"/><circle cx="274.21" cy="338.90" r="1.4" fill="#2f7ee6" fill-opacity="0.55" stroke="#2f7ee6" stroke-width="0.7"/><circle cx="289.88" cy="338.90" r="1.4" fill="#2f7ee6" fill-opacity="0.55" stroke="#2f7ee6" stroke-width="0.7"/><circle cx="305.55" cy="338.90" r="1.4" fill="#2f7ee6" fill-opacity="0.55" stroke="#2f7ee6" stroke-width="0.7"/><circle cx="321.22" cy="338.90" r="1.4" fill="#2f7ee6" fill-opacity="0.55" stroke="#2f7ee6" stroke-width="0.7"/><circle cx="336.89" cy="338.90" r="1.4" fill="#2f7ee6" fill-opacity="0.55" stroke="#2f7ee6" stroke-width="0.7"/><circle cx="352.56" cy="338.90" r="1.4" fill="#2f7ee6" fill-opacity="0.55" stroke="#2f7ee6" stroke-width="0.7"/><circle cx="368.23" cy="338.90" r="1.4" fill="#2f7ee6" fill-opacity="0.55" stroke="#2f7ee6" stroke-width="0.7"/><circle cx="383.90" cy="338.90" r="1.4" fill="#2f7ee6" fill-opacity="0.55" stroke="#2f7ee6" stroke-width="0.7"/><circle cx="399.57" cy="338.90" r="1.4" fill="#2f7ee6" fill-opacity="0.55" stroke="#2f7ee6" stroke-width="0.7"/><circle cx="415.24" cy="338.90" r="1.4" fill="#2f7ee6" fill-opacity="0.55" stroke="#2f7ee6" stroke-width="0.7"/><circle cx="430.91" cy="338.90" r="1.4" fill="#2f7ee6" fill-opacity="0.55" stroke="#2f7ee6" stroke-width="0.7"/><circle cx="446.58" cy="338.90" r="1.4" fill="#2f7ee6" fill-opacity="0.55" stroke="#2f7ee6" stroke-width="0.7"/><circle cx="462.25" cy="338.90" r="1.4" fill="#2f7ee6" fill-opacity="0.55" stroke="#2f7ee6" stroke-width="0.7"/><circle cx="477.92" cy="338.90" r="1.4" fill="#2f7ee6" fill-opacity="0.55" stroke="#2f7ee6" stroke-width="0.7"/><circle cx="493.59" cy="338.90" r="1.4" fill="#2f7ee6" fill-opacity="0.55" stroke="#2f7ee6" stroke-width="0.7"/><circle cx="509.26" cy="338.90" r="1.4" fill="#2f7ee6" fill-opacity="0.55" stroke="#2f7ee6" stroke-width="0.7"/><circle cx="524.93" cy="274.68" r="1.4" fill="#2f7ee6" fill-opacity="0.55" stroke="#2f7ee6" stroke-width="0.7"/></g>
</svg>

<!-- chart 2 card -->
<div class="card" style="left:539px;top:222px;width:357.3px;height:224px"></div>
<div class="abs" style="left:539px;top:222px;width:357.3px;height:20.5px;background:#f6f6f8;border-radius:3px 3px 0 0"></div>
<div class="t" style="left:550.5px;top:233.2px;font-size:6.5px;color:#4a4a4a;-webkit-text-stroke:0.16px #4a4a4a">Структура расходов</div>
<div class="t" style="left:740px;top:234.2px;width:147px;text-align:right;font-size:4.9px;color:#666">ФОТ, проекты, касса, регулярные платежи</div>
<svg width="900" height="508" style="position:absolute;left:0;top:0">
<g><line x1="571" y1="404.60" x2="888.3" y2="404.60" stroke="#ebebeb" stroke-width="0.6"/><line x1="571" y1="379.53" x2="888.3" y2="379.53" stroke="#ebebeb" stroke-width="0.6"/><line x1="571" y1="354.46" x2="888.3" y2="354.46" stroke="#ebebeb" stroke-width="0.6"/><line x1="571" y1="329.39" x2="888.3" y2="329.39" stroke="#ebebeb" stroke-width="0.6"/><line x1="571" y1="304.32" x2="888.3" y2="304.32" stroke="#ebebeb" stroke-width="0.6"/><line x1="571" y1="279.25" x2="888.3" y2="279.25" stroke="#ebebeb" stroke-width="0.6"/><line x1="571" y1="254.18" x2="888.3" y2="254.18" stroke="#ebebeb" stroke-width="0.6"/><line x1="573.40" y1="253.9" x2="573.40" y2="406.5" stroke="#ebebeb" stroke-width="0.6"/><line x1="653.10" y1="253.9" x2="653.10" y2="406.5" stroke="#ebebeb" stroke-width="0.6"/><line x1="732.50" y1="253.9" x2="732.50" y2="406.5" stroke="#ebebeb" stroke-width="0.6"/><line x1="811.80" y1="253.9" x2="811.80" y2="406.5" stroke="#ebebeb" stroke-width="0.6"/><line x1="888.30" y1="253.9" x2="888.30" y2="406.5" stroke="#ebebeb" stroke-width="0.6"/></g>
<g><rect x="585.00" y="275.31" width="56.6" height="129.29" fill="#1872f8"/><rect x="664.30" y="304.19" width="56.6" height="100.41" fill="#dc3c4c"/><rect x="743.60" y="277.29" width="56.6" height="127.31" fill="#fd841e"/><rect x="822.60" y="364.49" width="56.6" height="40.11" fill="#6c757d"/></g>
<g font-family="Liberation Sans" font-size="5.6" fill="#666"><text x="568.4" y="406.60" text-anchor="end">0</text><text x="568.4" y="381.53" text-anchor="end">100 000</text><text x="568.4" y="356.46" text-anchor="end">200 000</text><text x="568.4" y="331.39" text-anchor="end">300 000</text><text x="568.4" y="306.32" text-anchor="end">400 000</text><text x="568.4" y="281.25" text-anchor="end">500 000</text><text x="568.4" y="256.18" text-anchor="end">600 000</text><text x="613.30" y="414" text-anchor="middle">Payroll</text><text x="692.60" y="414" text-anchor="middle">Project costs</text><text x="771.90" y="414" text-anchor="middle">Cash costs</text><text x="850.90" y="414" text-anchor="middle">Regular payments</text></g>
</svg>

<!-- projects card -->
<div class="card" style="left:37px;top:452px;width:497.5px;height:60px"></div>
<div class="abs" style="left:37px;top:452px;width:497.5px;height:18px;background:#f6f6f8;border-radius:3px 3px 0 0"></div>
<div class="t" style="left:45.7px;top:457.9px;font-size:6.5px;color:#4a4a4a;-webkit-text-stroke:0.16px #4a4a4a">Проекты</div>
<div class="t" style="left:440px;top:460.6px;width:86px;text-align:right;font-size:4.9px;color:#666">Доход / расход / маржа</div>
<svg class="abs" style="left:0;top:0" width="900" height="508">
  <rect x="211.7" y="479.2" width="19" height="5.5" fill="#8ab4f8"/>
  <rect x="272.6" y="479.2" width="19" height="5.5" fill="#eea5b0"/>
  <rect x="320.8" y="479.2" width="19" height="5.5" fill="#8cc7a8"/>
  <g font-family="Liberation Sans" font-size="6" fill="#666">
    <text x="233.3" y="484.3">Поступление</text>
    <text x="294" y="484.3">Расходы</text>
    <text x="342" y="484.3">Маржа</text>
  </g>
</svg>
<svg width="900" height="508" style="position:absolute;left:0;top:0">
<line x1="70" y1="490.5" x2="529" y2="490.5" stroke="#ebebeb" stroke-width="0.6"/><line x1="73.50" y1="490.5" x2="73.50" y2="508" stroke="#ebebeb" stroke-width="0.6"/><line x1="88.74" y1="490.5" x2="88.74" y2="508" stroke="#ebebeb" stroke-width="0.6"/><line x1="103.97" y1="490.5" x2="103.97" y2="508" stroke="#ebebeb" stroke-width="0.6"/><line x1="119.21" y1="490.5" x2="119.21" y2="508" stroke="#ebebeb" stroke-width="0.6"/><line x1="134.45" y1="490.5" x2="134.45" y2="508" stroke="#ebebeb" stroke-width="0.6"/><line x1="149.68" y1="490.5" x2="149.68" y2="508" stroke="#ebebeb" stroke-width="0.6"/><line x1="164.92" y1="490.5" x2="164.92" y2="508" stroke="#ebebeb" stroke-width="0.6"/><line x1="180.16" y1="490.5" x2="180.16" y2="508" stroke="#ebebeb" stroke-width="0.6"/><line x1="195.40" y1="490.5" x2="195.40" y2="508" stroke="#ebebeb" stroke-width="0.6"/><line x1="210.63" y1="490.5" x2="210.63" y2="508" stroke="#ebebeb" stroke-width="0.6"/><line x1="225.87" y1="490.5" x2="225.87" y2="508" stroke="#ebebeb" stroke-width="0.6"/><line x1="241.11" y1="490.5" x2="241.11" y2="508" stroke="#ebebeb" stroke-width="0.6"/><line x1="256.34" y1="490.5" x2="256.34" y2="508" stroke="#ebebeb" stroke-width="0.6"/><line x1="271.58" y1="490.5" x2="271.58" y2="508" stroke="#ebebeb" stroke-width="0.6"/><line x1="286.82" y1="490.5" x2="286.82" y2="508" stroke="#ebebeb" stroke-width="0.6"/><line x1="302.06" y1="490.5" x2="302.06" y2="508" stroke="#ebebeb" stroke-width="0.6"/><line x1="317.29" y1="490.5" x2="317.29" y2="508" stroke="#ebebeb" stroke-width="0.6"/><line x1="332.53" y1="490.5" x2="332.53" y2="508" stroke="#ebebeb" stroke-width="0.6"/><line x1="347.77" y1="490.5" x2="347.77" y2="508" stroke="#ebebeb" stroke-width="0.6"/><line x1="363.00" y1="490.5" x2="363.00" y2="508" stroke="#ebebeb" stroke-width="0.6"/><line x1="378.24" y1="490.5" x2="378.24" y2="508" stroke="#ebebeb" stroke-width="0.6"/><line x1="393.48" y1="490.5" x2="393.48" y2="508" stroke="#ebebeb" stroke-width="0.6"/><line x1="408.71" y1="490.5" x2="408.71" y2="508" stroke="#ebebeb" stroke-width="0.6"/><line x1="423.95" y1="490.5" x2="423.95" y2="508" stroke="#ebebeb" stroke-width="0.6"/><line x1="439.19" y1="490.5" x2="439.19" y2="508" stroke="#ebebeb" stroke-width="0.6"/><line x1="454.43" y1="490.5" x2="454.43" y2="508" stroke="#ebebeb" stroke-width="0.6"/><line x1="469.66" y1="490.5" x2="469.66" y2="508" stroke="#ebebeb" stroke-width="0.6"/><line x1="484.90" y1="490.5" x2="484.90" y2="508" stroke="#ebebeb" stroke-width="0.6"/><line x1="500.14" y1="490.5" x2="500.14" y2="508" stroke="#ebebeb" stroke-width="0.6"/><line x1="515.37" y1="490.5" x2="515.37" y2="508" stroke="#ebebeb" stroke-width="0.6"/>
<rect x="471.5" y="490.7" width="3.3" height="20" fill="#8ab4f8"/>
<rect x="479.5" y="490.7" width="3.5" height="20" fill="#8cc7a8"/>
<g font-family="Liberation Sans" font-size="5.6" fill="#666"><text x="68.4" y="491.8" text-anchor="end">3 000 000</text></g>
</svg>

<!-- table card -->
<div class="card" style="left:539px;top:452px;width:357.3px;height:60px"></div>
<div class="abs" style="left:539px;top:452px;width:357.3px;height:18px;background:#f6f6f8;border-radius:3px 3px 0 0"></div>
<div class="t" style="left:550.5px;top:458.3px;font-size:6.5px;color:#4a4a4a;-webkit-text-stroke:0.16px #4a4a4a">Текущий / предыдущий</div>
<div class="t" style="left:780px;top:460.6px;width:107px;text-align:right;font-size:4.9px;color:#666">Ключевые показатели</div>
<div class="t b" style="left:548.5px;top:479.3px;font-size:6px;color:#555">Показатель</div>
<div class="t b" style="left:700px;top:479.3px;width:63.7px;text-align:right;font-size:6px;color:#555">Текущий</div>
<div class="t" style="left:821.8px;top:479.3px;font-size:6px;color:#999">⇆</div>
<div class="t" style="left:870px;top:479.3px;width:17.5px;text-align:right;font-size:6px;color:#777">%</div>
<div class="abs" style="left:548px;top:489.4px;width:340px;height:0.6px;background:#e4e4e4"></div>
<div class="t" style="left:548.5px;top:492.8px;font-size:6.1px;color:#444">Выручка</div>
<div class="t" style="left:700px;top:492.8px;width:63.7px;text-align:right;font-size:6px;color:#444">10 320 000</div>
<div class="t" style="left:770px;top:492.8px;width:57px;text-align:right;font-size:6px;color:#36a98c">+9 210 000</div>
<div class="t" style="left:840px;top:492.8px;width:48px;text-align:right;font-size:6px;color:#36a98c">+829,7%</div>
<div class="abs" style="left:548px;top:502.7px;width:340px;height:0.6px;background:#e4e4e4"></div>


</body></html>
